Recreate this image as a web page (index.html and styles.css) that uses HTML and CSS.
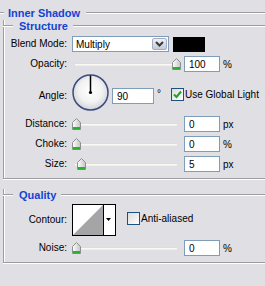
FILE: index.html
```html
<!DOCTYPE html>
<html lang="en">
<head>
    <meta charset="UTF-8">
    <title>Inner Shadow</title>
    <link rel="stylesheet" href="styles.css">
</head>
<body>
<div class="panel">
    <div class="legend outer"><span>Inner Shadow</span></div>

    <section class="group">
        <div class="legend"><span>Structure</span></div>

        <div class="row">
            <label class="label">Blend Mode:</label>
            <div class="select">
                <span class="select-text">Multiply</span>
                <span class="select-btn">
                    <svg width="9" height="6" viewBox="0 0 9 6"><path d="M1 1 L4.5 4.5 L8 1" fill="none" stroke="#3a3a3a" stroke-width="2"/></svg>
                </span>
            </div>
            <span class="swatch"></span>
        </div>

        <div class="row">
            <label class="label">Opacity:</label>
            <div class="slider">
                <span class="track"></span>
                <span class="thumb" style="left: 100px">
                    <svg width="9" height="12" viewBox="0 0 9 12"><defs><linearGradient id="tg1" x1="0" y1="0" x2="1" y2="0"><stop offset="0" stop-color="#ffffff"/><stop offset="1" stop-color="#c4c4c4"/></linearGradient></defs><path d="M0.5 4.5 L4.5 0.5 L8.5 4.5 L8.5 11.5 L0.5 11.5 Z" fill="url(#tg1)" stroke="#8a9290"/><rect x="1" y="9" width="7" height="2.5" fill="#22b42a"/></svg>
                </span>
            </div>
            <input class="num" value="100" readonly>
            <span class="unit">%</span>
        </div>

        <div class="row angle-row">
            <label class="label">Angle:</label>
            <svg class="dial" width="37" height="37" viewBox="0 0 37 37">
                <defs>
                    <radialGradient id="dg" cx="0.5" cy="0.45" r="0.55">
                        <stop offset="0" stop-color="#ffffff"/>
                        <stop offset="0.6" stop-color="#f2f2f2"/>
                        <stop offset="1" stop-color="#d2d3da"/>
                    </radialGradient>
                </defs>
                <circle cx="18.5" cy="18.5" r="17.5" fill="url(#dg)" stroke="#3a4c7e" stroke-width="1.5"/>
                <line x1="18.5" y1="18.5" x2="18.5" y2="1.5" stroke="#000" stroke-width="1.5"/>
                <circle cx="18.5" cy="18.5" r="1.6" fill="#000"/>
            </svg>
            <input class="num wide" value="90" readonly>
            <span class="deg">°</span>
            <span class="check on">
                <svg width="11" height="11" viewBox="0 0 11 11"><path d="M2 5.5 L4.5 8 L9 2.5" fill="none" stroke="#21a326" stroke-width="2"/></svg>
            </span>
            <span class="check-text">Use Global Light</span>
        </div>

        <div class="row">
            <label class="label">Distance:</label>
            <div class="slider">
                <span class="track"></span>
                <span class="thumb" style="left: 0px">
                    <svg width="9" height="12" viewBox="0 0 9 12"><defs><linearGradient id="tg2" x1="0" y1="0" x2="1" y2="0"><stop offset="0" stop-color="#ffffff"/><stop offset="1" stop-color="#c4c4c4"/></linearGradient></defs><path d="M0.5 4.5 L4.5 0.5 L8.5 4.5 L8.5 11.5 L0.5 11.5 Z" fill="url(#tg2)" stroke="#8a9290"/><rect x="1" y="9" width="7" height="2.5" fill="#22b42a"/></svg>
                </span>
            </div>
            <input class="num" value="0" readonly>
            <span class="unit">px</span>
        </div>

        <div class="row">
            <label class="label">Choke:</label>
            <div class="slider">
                <span class="track"></span>
                <span class="thumb" style="left: 0px">
                    <svg width="9" height="12" viewBox="0 0 9 12"><defs><linearGradient id="tg3" x1="0" y1="0" x2="1" y2="0"><stop offset="0" stop-color="#ffffff"/><stop offset="1" stop-color="#c4c4c4"/></linearGradient></defs><path d="M0.5 4.5 L4.5 0.5 L8.5 4.5 L8.5 11.5 L0.5 11.5 Z" fill="url(#tg3)" stroke="#8a9290"/><rect x="1" y="9" width="7" height="2.5" fill="#22b42a"/></svg>
                </span>
            </div>
            <input class="num" value="0" readonly>
            <span class="unit">%</span>
        </div>

        <div class="row">
            <label class="label">Size:</label>
            <div class="slider">
                <span class="track"></span>
                <span class="thumb" style="left: 5px">
                    <svg width="9" height="12" viewBox="0 0 9 12"><defs><linearGradient id="tg4" x1="0" y1="0" x2="1" y2="0"><stop offset="0" stop-color="#ffffff"/><stop offset="1" stop-color="#c4c4c4"/></linearGradient></defs><path d="M0.5 4.5 L4.5 0.5 L8.5 4.5 L8.5 11.5 L0.5 11.5 Z" fill="url(#tg4)" stroke="#8a9290"/><rect x="1" y="9" width="7" height="2.5" fill="#22b42a"/></svg>
                </span>
            </div>
            <input class="num" value="5" readonly>
            <span class="unit">px</span>
        </div>
    </section>

    <section class="group quality">
        <div class="legend"><span>Quality</span></div>

        <div class="row contour-row">
            <label class="label">Contour:</label>
            <svg class="contour" width="44" height="32" viewBox="0 0 44 32">
                <rect x="0.5" y="0.5" width="43" height="31" fill="#fff" stroke="#000"/>
                <polygon points="1,31 31,1 31,31" fill="#a5a5a7"/>
                <line x1="31.5" y1="0" x2="31.5" y2="32" stroke="#000"/>
                <polygon points="34,14 39,14 36.5,17" fill="#000"/>
            </svg>
            <span class="check anti"></span>
            <span class="check-text">Anti-aliased</span>
        </div>

        <div class="row">
            <label class="label">Noise:</label>
            <div class="slider">
                <span class="track"></span>
                <span class="thumb" style="left: 0px">
                    <svg width="9" height="12" viewBox="0 0 9 12"><defs><linearGradient id="tg5" x1="0" y1="0" x2="1" y2="0"><stop offset="0" stop-color="#ffffff"/><stop offset="1" stop-color="#c4c4c4"/></linearGradient></defs><path d="M0.5 4.5 L4.5 0.5 L8.5 4.5 L8.5 11.5 L0.5 11.5 Z" fill="url(#tg5)" stroke="#8a9290"/><rect x="1" y="9" width="7" height="2.5" fill="#22b42a"/></svg>
                </span>
            </div>
            <input class="num" value="0" readonly>
            <span class="unit">%</span>
        </div>
    </section>
</div>
</body>
</html>
```

FILE: styles.css
```css
*{
    margin: 0;
    padding: 0;
    box-sizing: border-box;
}
html,body{
    width: 100%;
    height: 100%;
}
body{
    background: #e0dfe3;
    font: 10px "Liberation Sans", Arial, sans-serif;
    color: #000;
    overflow: hidden;
}
.panel{
    width: 100%;
    padding-top: 7px;
}
/* group titles with the etched rule */
.legend{
    display: flex;
    align-items: center;
    height: 12px;
}
.legend::before,
.legend::after{
    content: "";
    height: 0;
    border-top: 1px solid #9d9da1;
    border-bottom: 1px solid #fff;
}
.legend::before{
    width: 4px;
}
.legend::after{
    flex: 1;
}
.legend span{
    font-weight: bold;
    font-size: 11px;
    line-height: 12px;
    color: #1443d4;
    padding: 0 6px 0 4px;
}
.group{
    margin: 6px 0 0 3px;
    border-left: 1px solid #9d9da1;
    border-bottom: 1px solid #9d9da1;
    box-shadow: inset 1px 0 0 #fff, 0 1px 0 #fff;
    padding-bottom: 6px;
}
.group .legend{
    margin: -5px 0 0 -1px;
}
.group .legend::before{
    width: 10px;
}
.group .legend span{
    padding: 0 5px 0 6px;
}
.quality{
    margin-top: 15px;
}
/* rows */
.row{
    display: flex;
    align-items: center;
    height: 16px;
    margin-top: 4px;
}
.label{
    flex: none;
    width: 63px;
    margin-right: 5px;
    text-align: right;
    line-height: 16px;
}
.select{
    display: flex;
    align-items: center;
    width: 97px;
    height: 16px;
    background: #fff;
    border: 1px solid #7f9db9;
    padding: 0 1px 0 3px;
}
.select-text{
    flex: 1;
}
.select-btn{
    display: flex;
    align-items: center;
    justify-content: center;
    width: 15px;
    height: 12px;
    border: 1px solid #a3adc2;
    border-radius: 2px;
    background: linear-gradient(#eef0f5, #c3cad9);
}
.swatch{
    width: 32px;
    height: 15px;
    margin-left: 4px;
    background: #000;
}
.slider{
    position: relative;
    flex: none;
    width: 109px;
    height: 16px;
}
.track{
    display: block;
    height: 3px;
    margin: 7px 4px 0 3px;
    border-radius: 1px;
    background: linear-gradient(#cfcdc1, #fbfaf3 45%, #eeece0);
}
.thumb{
    position: absolute;
    top: 2px;
    display: block;
    width: 9px;
    height: 12px;
}
.thumb svg{
    display: block;
}
.num{
    width: 36px;
    height: 16px;
    margin-left: 3px;
    border: 1px solid #7f9db9;
    background: #fff;
    padding: 0 0 0 4px;
    font: 10px "Liberation Sans", Arial, sans-serif;
    color: #000;
    outline: none;
}
.unit{
    margin-left: 3px;
}
/* angle */
.angle-row{
    height: 37px;
    margin-top: 2px;
    align-items: flex-start;
}
.angle-row .label,
.angle-row .num,
.angle-row .deg,
.angle-row .check,
.angle-row .check-text{
    margin-top: 14px;
}
.dial{
    display: block;
    flex: none;
}
.num.wide{
    width: 42px;
}
.deg{
    margin-left: 3px;
    line-height: 12px;
}
.check{
    display: flex;
    align-items: center;
    justify-content: center;
    flex: none;
    width: 13px;
    height: 13px;
    margin-left: 10px;
    border: 1px solid #1c5180;
    background: linear-gradient(135deg, #dcdcd7, #fff);
}
.check-text{
    margin-left: 1px;
    line-height: 13px;
    white-space: nowrap;
}
/* quality */
.contour-row{
    height: 32px;
    margin-top: 3px;
}
.contour{
    display: block;
    flex: none;
}
.check.anti{
    margin-left: 11px;
    margin-top: -3px;
}
.contour-row .check-text{
    margin-top: -3px;
}
.angle-row + .row{
    margin-top: 5px;
}
```
